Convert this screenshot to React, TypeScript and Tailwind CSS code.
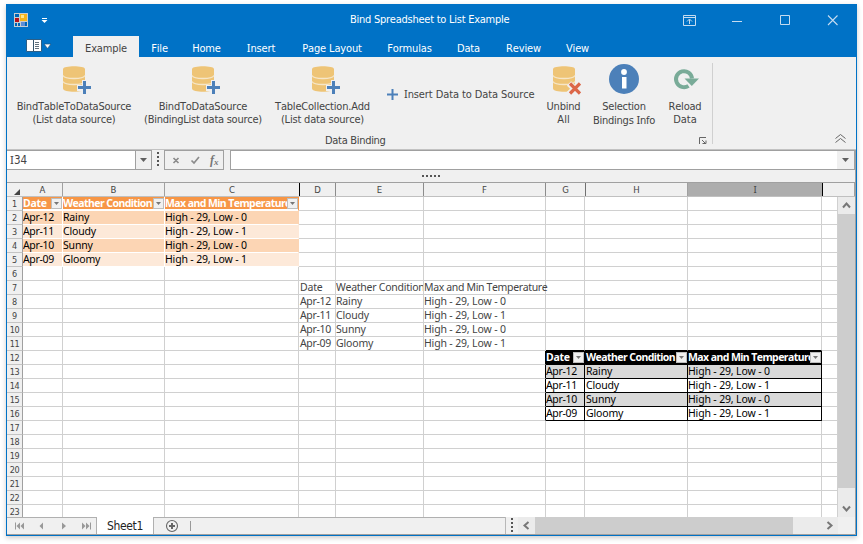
import React from "react";

const UI = "font-['DejaVu_Sans_Condensed','DejaVu_Sans',sans-serif] [font-kerning:none]";

function Label({ text, className = "" }: { text: string; className?: string }) {
  return (
    <span className={`whitespace-nowrap ${className}`}>
      {text.split(/(I)/).map((part, i) =>
        part === "I" ? <span key={i} className="font-['Noto_Sans',sans-serif]">I</span> : part
      )}
    </span>
  );
}

function Database({ mark }: { mark: "plus" | "cross" }) {
  return (
    <svg width="34" height="34" viewBox="0 0 34 34" className="block shrink-0">
      <path d="M6 6C6 2.200 28 2.200 28 6V25.500C28 29.800 6 29.800 6 25.500Z" fill="#eec476" />
      <path d="M6 12.500C8 16.500 26 16.500 28 12.500M6 18.500C8 22.500 26 22.500 28 18.500" stroke="#f6e6c8" strokeWidth="1.300" fill="none" />
      {mark === "plus" ? (
        <>
          <path d="M20 22h5v-5h5v5h4v6h-4v5h-5v-5h-5z" fill="#f0f0f0" />
          <path d="M21 24.500h13M27.500 18v13" stroke="#4c80b9" strokeWidth="3" />
        </>
      ) : (
        <>
          <path d="M22 20.500l11 10.500M33 20.500l-11 10.500" stroke="#f0f0f0" strokeWidth="6" />
          <path d="M23 20.500l10 10M33 20.500l-10 10" stroke="#dc6748" strokeWidth="3.200" />
        </>
      )}
    </svg>
  );
}

function InfoIcon() {
  return (
    <svg width="34" height="34" viewBox="0 0 34 34" className="block shrink-0">
      <circle cx="17" cy="16" r="15" fill="#4c80b9" />
      <circle cx="17" cy="9" r="2.900" fill="#fff" />
      <path d="M15 14h4.500v11.500h-4.500z" fill="#fff" />
    </svg>
  );
}

function ReloadIcon() {
  return (
    <svg width="34" height="34" viewBox="0 0 34 34" className="block shrink-0">
      <path d="M20.500 22.800A8 8 0 1 1 24 15.500" fill="none" stroke="#79ab98" strokeWidth="4" />
      <path d="M16.500 15.500h14.500l-7.200 7.500z" fill="#79ab98" />
    </svg>
  );
}

function RibbonButton({ icon, first, second, className }: { icon: React.ReactNode; first: React.ReactNode; second: React.ReactNode; className: string }) {
  return (
    <button className={`flex flex-col items-center pt-[6px] text-[11px] leading-[13px] ${className}`}>
      {icon}
      <div className="h-[3px]" />
      {first}
      {second}
    </button>
  );
}

const tabs: [string, string][] = [
  ["Example", "w-[66px] bg-[#f0f0f0] text-[#444]"],
  ["File", "w-[41px] text-white"],
  ["Home", "w-[53px] text-white"],
  ["Insert", "w-[56px] text-white"],
  ["Page Layout", "w-[86px] text-white"],
  ["Formulas", "w-[69px] text-white"],
  ["Data", "w-[49px] text-white"],
  ["Review", "w-[61px] text-white"],
  ["View", "w-[47px] text-white"],
];

function TitleBar() {
  return (
    <header className="h-[53px] shrink-0 bg-[#0072c6]">
      <div className="flex h-[32px] items-center">
        <svg width="14" height="14" className="ml-[7px]" shapeRendering="crispEdges">
          <path d="M0 0h14v14H0z" fill="#c8ccd0" />
          <path d="M1 1h4v3H1zM1 10h5v3H1zM11 9h2v4h-2z" fill="#0065b5" />
          <path d="M1 5h4v4H1z" fill="#b5121b" />
          <path d="M6 1h7v7H6z" fill="#f3b41c" />
          <path d="M7 2h3v3H7z" fill="#ffe58a" />
          <path d="M7 9h4v4H7z" fill="#5b8ed8" />
          <path d="M3 10h1v3H3z" fill="#c8ccd0" />
        </svg>
        <svg width="7" height="7" className="ml-[13px]">
          <path d="M1 1.500h5" stroke="#fff" />
          <path d="M.5 3h6L3.500 6z" fill="#fff" />
        </svg>
        <Label text="Bind Spreadsheet to List Example" className="ml-[302px] w-[161px] text-[11px] tracking-[-0.25px] text-white" />
        <svg width="160" height="16" className="ml-[171px]" fill="none" stroke="#c6dcf0">
          <path d="M1.500 3.500h12v10h-12zM1.500 5.500h12M7.500 12V7.500M5 9.500l2.500-2.500L10 9.500" />
          <path d="M50 9.500h10M98.500 3.500h9v9h-9z" />
          <path d="M146 3.500l9.500 9.500M155.500 3.500l-9.500 9.500" strokeWidth="1.100" />
        </svg>
      </div>
      <nav className="flex h-[21px] pl-[19px]">
        <button className="flex w-[47px] items-center">
          <svg width="26" height="14" className="-mt-[1px]">
            <path d="M.5 .5h15v12H.5z" fill="#fff" stroke="#2d5f86" />
            <path d="M7.500 1v11" stroke="#35546b" />
            <path d="M9 3.500h4M9 5.500h4M9 7.500h4M9 9.500h4" stroke="#61717c" />
            <path d="M18 5h7l-3.500 4.500z" fill="#fff" stroke="#1a5483" strokeWidth=".7" />
          </svg>
        </button>
        {tabs.map(([name, style]) => (
          <button key={name} className={`flex h-full items-center justify-center pt-[3px] text-[11px] leading-[13px] tracking-[-0.15px] ${style}`}>
            <Label text={name} />
          </button>
        ))}
      </nav>
    </header>
  );
}

function Ribbon() {
  return (
    <section className="flex h-[93px] shrink-0 border-b border-[#c2c2c2] bg-[#f0f0f0] text-[#444]">
      <div className="mt-[6px] h-[81px] w-[706px] border-r border-[#d0d0d0]">
        <div className="-mt-[6px] flex h-[76px]">
          <RibbonButton className="w-[134px]" icon={<Database mark="plus" />} first={<Label text="BindTableToDataSource" className="tracking-[-0.23px]" />} second={<Label text="(List data source)" className="tracking-[-0.2px]" />} />
          <RibbonButton className="w-[124px]" icon={<Database mark="plus" />} first={<Label text="BindToDataSource" className="tracking-[-0.22px]" />} second={<Label text="(BindingList data source)" className="tracking-[-0.25px]" />} />
          <RibbonButton className="w-[115px]" icon={<Database mark="plus" />} first={<Label text="TableCollection.Add" className="tracking-[-0.2px]" />} second={<Label text="(List data source)" className="tracking-[-0.2px]" />} />
          <button className="flex h-[74px] w-[161px] items-center pl-[7px] text-[11px]">
            <svg width="11" height="11"><path d="M0 5.500h11M5.500 0v11" stroke="#4c80b9" strokeWidth="2" /></svg>
            <Label text="Insert Data to Data Source" className="mt-[1px] ml-[6px] tracking-[-0.1px]" />
          </button>
          <RibbonButton className="w-[45px]" icon={<Database mark="cross" />} first={<Label text="Unbind" className="tracking-[-0.2px]" />} second={<Label text="All" />} />
          <RibbonButton className="w-[76px]" icon={<InfoIcon />} first={<Label text="Selection" className="tracking-[-0.25px]" />} second={<Label text="Bindings Info" className="tracking-[-0.25px]" />} />
          <RibbonButton className="w-[46px]" icon={<ReloadIcon />} first={<Label text="Reload" className="tracking-[-0.2px]" />} second={<Label text="Data" />} />
        </div>
        <div className="flex h-[16px] items-center justify-between pr-[5px] text-[11px] leading-[16px]">
          <Label text="Data Binding" className="ml-[318px] tracking-[-0.3px]" />
          <svg width="8" height="8" fill="none" stroke="#666"><path d="M.5 7V.5H7M3 3l3 3M7 3.500V6.500H3.500" /></svg>
        </div>
      </div>
      <div className="flex flex-1 items-end justify-end pb-[6px] pr-[10px]">
        <svg width="11" height="9" fill="none" stroke="#666"><path d="M.5 4.500l5-4 5 4M.5 8.500l5-4 5 4" /></svg>
      </div>
    </section>
  );
}

function Caret() {
  return <svg width="7" height="4"><path d="M0 0h7L3.500 4z" fill="#606060" /></svg>;
}

function FormulaBar() {
  return (
    <section className="flex h-[20px] shrink-0 bg-[#f0f0f0]">
      <div className="flex w-[145px] border border-l-0 border-[#a0a0a0] bg-white">
        <Label text="I34" className="flex-1 pl-[3px] text-[11.5px] leading-[18px] text-[#444]" />
        <div className="flex w-[16px] items-center justify-center border-l border-[#a0a0a0] bg-[#f0f0f0]"><Caret /></div>
      </div>
      <svg width="12" height="20" className="shrink-0" fill="#555">
        <path d="M5 2h2v2H5zM5 6h2v2H5zM5 10h2v2H5zM5 14h2v2H5z" />
      </svg>
      <div className="flex w-[60px] items-center border border-[#a0a0a0] text-[#8c8c8c]">
        <svg width="58" height="18" fill="none" stroke="#8c8c8c" strokeWidth="1.700">
          <path d="M8.500 7l5 5M13.500 7l-5 5M26.500 9.500l2.500 2.500 5-6" />
          <text x="45" y="13" fill="#777" stroke="none" fontFamily="Liberation Serif, serif" fontStyle="italic" fontWeight="bold" fontSize="12">f</text>
          <text x="49" y="14" fill="#777" stroke="none" fontFamily="Liberation Serif, serif" fontStyle="italic" fontWeight="bold" fontSize="9">x</text>
        </svg>
      </div>
      <div className="ml-[6px] flex flex-1 justify-end border border-[#a0a0a0] bg-white">
        <div className="flex w-[17px] items-center justify-center bg-[#f0f0f0]"><Caret /></div>
      </div>
    </section>
  );
}

const widths = ["w-[40px]", "w-[102px]", "w-[134px]", "w-[37px]", "w-[88px]", "w-[122px]", "w-[39px]", "w-[103px]", "w-[134px]", "w-[16px]"];

const heads: [string, string][] = [
  ["A", "w-[40px] border-[#a0a0a0]"],
  ["B", "w-[102px] border-[#a0a0a0]"],
  ["C", "w-[135px] border-black"],
  ["D", "w-[36px] border-[#8c8c8c]"],
  ["E", "w-[88px] border-[#8c8c8c]"],
  ["F", "w-[122px] border-[#8c8c8c]"],
  ["G", "w-[40px] border-[#707070]"],
  ["H", "w-[102px] border-[#a0a0a0]"],
  ["I", "w-[135px] border-black bg-[#adadad]"],
  ["", "w-[32px] border-[#a0a0a0]"],
];

const data = [
  ["Date", "Weather Condition", "Max and Min Temperature"],
  ["Apr-12", "Rainy", "High - 29, Low - 0"],
  ["Apr-11", "Cloudy", "High - 29, Low - 1"],
  ["Apr-10", "Sunny", "High - 29, Low - 0"],
  ["Apr-09", "Gloomy", "High - 29, Low - 1"],
];

function Filter() {
  return (
    <span className="mt-[1px] flex h-[11px] w-[11px] shrink-0 items-center justify-center border border-[#bdbdbd] bg-[#f0f0f0]">
      <svg width="5" height="3"><path d="M0 0h5L2.500 3z" fill="#777" /></svg>
    </span>
  );
}

function Cell({ row, col }: { row: number; col: number }) {
  let text = "";
  let style = "border-[#d0d0d0] text-[#444]";
  let filter = false;
  let overflow = false;
  if (row <= 5 && col <= 2) {
    text = data[row - 1][col];
    filter = row === 1;
    const edge = col === 2;
    if (filter) style = `text-white font-bold bg-[#f79646] bg-clip-padding border-b-white shadow-[inset_0_-1px_0_#fff] ${edge ? "border-r-[#f79646]" : "border-r-white"}`;
    else if (row % 2 === 0) style = `text-black bg-[#fcd5b4] border-b-white ${edge ? "border-r-[#fcd5b4]" : "border-r-white"}`;
    else style = `text-black bg-[#fde9d9] border-b-white ${edge ? "border-r-[#fde9d9]" : "border-r-white"}`;
  } else if (row >= 7 && row <= 11 && col >= 3 && col <= 5) {
    text = data[row - 7][col - 3];
    overflow = col === 5;
  } else if (row >= 12 && row <= 16 && col >= 6 && col <= 8) {
    text = data[row - 12][col - 6];
    filter = row === 12;
    if (filter) style = "text-white font-bold bg-black border-black";
    else if (row % 2) style = "text-black bg-[#d9d9d9] border-black";
    else style = "text-black bg-white border-black";
  }
  if (row === 11 && col >= 6 && col <= 8) style = "border-r-[#d0d0d0] border-b-black";
  if (row >= 12 && row <= 16 && col === 5) style = "border-r-black border-b-[#d0d0d0]";
  let spacing = "tracking-[-0.16px]";
  if (filter) spacing = col % 3 === 0 ? "tracking-[-0.3px]" : "tracking-[-0.57px]";
  else if (text.startsWith("Apr")) spacing = "tracking-[-0.35px]";
  else if (text.startsWith("Max")) spacing = "tracking-[-0.35px]";
  else if (text.startsWith("Weather")) spacing = "tracking-[-0.25px]";
  const inset = col === 3 || col === 7 ? "pl-[1px]" : "";
  return (
    <div className={`flex h-[14px] shrink-0 items-start border-b border-r ${widths[col]} ${overflow ? "" : "overflow-hidden"} ${style}`}>
      {text && <span className={`min-w-0 flex-1 whitespace-nowrap text-[10.5px] leading-[13px] ${inset} ${overflow ? "" : "overflow-hidden"} ${spacing}`}>{text}</span>}
      {filter && <Filter />}
    </div>
  );
}

function Grid() {
  return (
    <section className="flex min-h-0 flex-1 flex-col bg-[#f0f0f0]">
      <div className="flex h-[15px] shrink-0 border-y border-t-[#a0a0a0] border-b-[#c0c0c0] text-[9.5px] leading-[14px] text-[#444]">
        <div className="flex w-[16px] items-end justify-end pb-[1px] pr-[3px]">
          <svg width="6" height="6"><path d="M6 0v6H0z" fill="#444" /></svg>
        </div>
        {heads.map(([name, style], i) => (
          <div key={i} className={`shrink-0 border-r text-center ${style}`}><Label text={name} /></div>
        ))}
      </div>
      <div className="flex h-[320px] shrink-0">
        <div className="w-[831px] overflow-hidden bg-white">
          {Array.from({ length: 23 }, (_, i) => i + 1).map((row) => (
            <div key={row} className="flex font-['Noto_Sans',sans-serif]">
              <div className={`h-[14px] w-[16px] shrink-0 border-b border-r border-b-[#c4c4c4] border-r-[#a0a0a0] bg-[#f0f0f0] text-center text-[9px] leading-[15px] tracking-[-0.4px] text-[#444] ${UI}`}>{row}</div>
              {widths.map((_, col) => <Cell key={col} row={row} col={col} />)}
            </div>
          ))}
        </div>
        <div className="flex w-[17px] flex-col bg-[#ebebeb]">
          <svg width="17" height="17"><path d="M5 10.500l3.500-4 3.500 4" fill="none" stroke="#777" strokeWidth="2" /></svg>
          <div className="h-[274px] bg-[#cdcdcd]" />
          <svg width="17" height="17" className="mt-[12px]"><path d="M5 6.500l3.500 4 3.500-4" fill="none" stroke="#777" strokeWidth="2" /></svg>
        </div>
      </div>
    </section>
  );
}

function BottomBar() {
  return (
    <footer className="flex h-[18px] shrink-0 border-b border-[#a0a0a0] bg-[#f0f0f0]">
      <div className="flex w-[499px] border-r border-[#b8b8b8]">
        <div className="w-[90px] border-r border-t border-[#b0b0b0]">
          <svg width="89" height="16" fill="#999">
            <path d="M8 4.500h1v7H8zM13 4.500v7L9.500 8zM17 4.500v7l-3.500-3.500zM36 4.500v7l-3.500-3.500zM55 4.500v7l4-3.500zM75 4.500v7l3.500-3.500zM79 4.500v7l3.500-3.500zM83 4.500h1v7h-1z" />
          </svg>
        </div>
        <div className="w-[56px] bg-white text-center text-[12px] leading-[18px] tracking-[-0.35px] text-[#222]">Sheet1</div>
        <div className="flex flex-1 border-l border-t border-[#b0b0b0]">
          <svg width="50" height="16" fill="none" stroke="#666">
            <circle cx="18" cy="8" r="5.500" strokeWidth="1.100" />
            <path d="M15 8h6M18 5v6" strokeWidth="2" />
            <path d="M36.500 3v10" stroke="#999" />
          </svg>
        </div>
      </div>
      <svg width="12" height="17" fill="#555"><path d="M5 1h2v2H5zM5 5h2v2H5zM5 9h2v2H5zM5 13h2v2H5z" /></svg>
      <div className="flex w-[320px] bg-[#ebebeb]">
        <svg width="17" height="17"><path d="M10.500 5l-4 3.500 4 3.500" fill="none" stroke="#777" strokeWidth="2" /></svg>
        <div className="w-[258px] bg-[#cdcdcd]" />
        <svg width="17" height="17" className="ml-auto"><path d="M6.500 5l4 3.500-4 3.500" fill="none" stroke="#777" strokeWidth="2" /></svg>
      </div>
    </footer>
  );
}

export default function App() {
  return (
    <div className={`h-[544px] w-[863px] overflow-hidden bg-white pl-[6px] pt-[4px] ${UI}`}>
      <main className="flex h-[532px] w-[851px] flex-col border border-t-0 border-[#0072c6] shadow-[0_2px_5px_rgba(0,0,0,0.2)]">
        <TitleBar />
        <Ribbon />
        <div className="flex min-h-0 flex-1 flex-col border-r border-[#a0a0a0]">
          <FormulaBar />
          <div className="flex h-[12px] shrink-0 items-center justify-center bg-[#f0f0f0]">
            <svg width="18" height="2" fill="#555"><path d="M0 0h2v2H0zM4 0h2v2H4zM8 0h2v2H8zM12 0h2v2h-2zM16 0h2v2h-2z" /></svg>
          </div>
          <Grid />
          <BottomBar />
        </div>
      </main>
    </div>
  );
}
